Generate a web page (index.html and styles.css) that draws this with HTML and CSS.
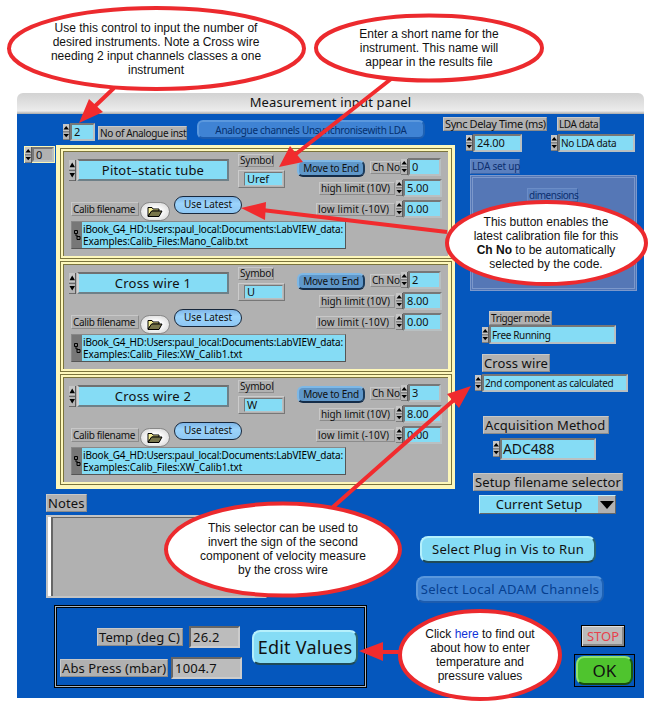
FILE: index.html
```html
<!DOCTYPE html>
<html lang="en">
<head>
<meta charset="utf-8">
<title>Measurement input panel</title>
<link rel="stylesheet" href="styles.css">
</head>
<body>
<svg class="defs" width="0" height="0">
  <symbol id="step" viewBox="0 0 7 18" preserveAspectRatio="none">
    <rect width="7" height="18" fill="#5c5c5c"/>
    <rect width="6" height="8.3" fill="#c6c6c6"/><rect y="9.3" width="6" height="8" fill="#b4b4b4"/>
    <path d="M3.2 2.2 6 6.2H.5zM3.2 15 .5 11.2H6z" fill="#000"/>
  </symbol>
  <symbol id="folder" viewBox="0 0 16 12">
    <path d="M1 10V1.5h4l1 1.5h6v2H5z" fill="#f5ee96" stroke="#000"/>
    <path d="M1 10.5 4.5 5H15l-3 5.500z" fill="#77754a" stroke="#000"/>
  </symbol>
  <symbol id="pathmark" viewBox="0 0 8 12">
    <path d="M1.500 1.500h3v3h-3zM4 7.500h3v3H4zM3 4.500V7h2" fill="none" stroke="#000"/>
  </symbol>
</svg>
<div class="stage">
  <div class="window">
    <div class="titlebar"><span class="t-title">Measurement input panel</span></div>
    <div class="panel">
      <div class="left">
        <div class="toolbar">
          <div class="spin count"><svg class="step"><use href="#step"/></svg><div class="field">2</div></div>
          <div class="label inst">No of Analogue inst</div>
          <div class="pill sync">Analogue channels Unsynchronisewith LDA</div>
        </div>
        <div class="array-row">
          <div class="spin index"><svg class="step"><use href="#step"/></svg><div class="field">0</div></div>
          <div class="array">
            <div class="cell"><div class="cell-in">
              <div class="cell-top">
                <div class="col-a">
                  <div class="spin name"><svg class="step"><use href="#step"/></svg><div class="field n1">Pitot–static tube</div></div>
                  <div class="calib"><div class="label file">Calib filename</div><div class="browse"><svg><use href="#folder"/></svg></div><div class="latest">Use Latest</div></div>
                </div>
                <div class="col-b"><div class="label symbol">Symbol</div><div class="symbox"><div class="field">Uref</div></div></div>
                <div class="move">Move to End</div>
                <div class="col-d">
                  <div class="line ch"><div class="label">Ch No</div><div class="spin"><svg class="step"><use href="#step"/></svg><div class="field">0</div></div></div>
                  <div class="line"><div class="label hi">high limit (10V)</div><div class="spin"><svg class="step"><use href="#step"/></svg><div class="field">5.00</div></div></div>
                  <div class="line"><div class="label lo">low limit (-10V)</div><div class="spin"><svg class="step"><use href="#step"/></svg><div class="field">0.00</div></div></div>
                </div>
              </div>
              <div class="path"><svg><use href="#pathmark"/></svg><div class="path-text"><div class="p1">iBook_G4_HD:Users:paul_local:Documents:LabVIEW_data:</div><div class="p2">Examples:Calib_Files:Mano_Calib.txt</div></div></div>
            </div></div>
            <div class="cell"><div class="cell-in">
              <div class="cell-top">
                <div class="col-a">
                  <div class="spin name"><svg class="step"><use href="#step"/></svg><div class="field">Cross wire 1</div></div>
                  <div class="calib"><div class="label file">Calib filename</div><div class="browse"><svg><use href="#folder"/></svg></div><div class="latest">Use Latest</div></div>
                </div>
                <div class="col-b"><div class="label symbol">Symbol</div><div class="symbox"><div class="field">U</div></div></div>
                <div class="move">Move to End</div>
                <div class="col-d">
                  <div class="line ch"><div class="label">Ch No</div><div class="spin"><svg class="step"><use href="#step"/></svg><div class="field">2</div></div></div>
                  <div class="line"><div class="label hi">high limit (10V)</div><div class="spin"><svg class="step"><use href="#step"/></svg><div class="field">8.00</div></div></div>
                  <div class="line"><div class="label lo">low limit (-10V)</div><div class="spin"><svg class="step"><use href="#step"/></svg><div class="field">0.00</div></div></div>
                </div>
              </div>
              <div class="path"><svg><use href="#pathmark"/></svg><div class="path-text"><div class="p1">iBook_G4_HD:Users:paul_local:Documents:LabVIEW_data:</div><div class="p2">Examples:Calib_Files:XW_Calib1.txt</div></div></div>
            </div></div>
            <div class="cell"><div class="cell-in">
              <div class="cell-top">
                <div class="col-a">
                  <div class="spin name"><svg class="step"><use href="#step"/></svg><div class="field">Cross wire 2</div></div>
                  <div class="calib"><div class="label file">Calib filename</div><div class="browse"><svg><use href="#folder"/></svg></div><div class="latest">Use Latest</div></div>
                </div>
                <div class="col-b"><div class="label symbol">Symbol</div><div class="symbox"><div class="field">W</div></div></div>
                <div class="move">Move to End</div>
                <div class="col-d">
                  <div class="line ch"><div class="label">Ch No</div><div class="spin"><svg class="step"><use href="#step"/></svg><div class="field">3</div></div></div>
                  <div class="line"><div class="label hi">high limit (10V)</div><div class="spin"><svg class="step"><use href="#step"/></svg><div class="field">8.00</div></div></div>
                  <div class="line"><div class="label lo">low limit (-10V)</div><div class="spin"><svg class="step"><use href="#step"/></svg><div class="field">0.00</div></div></div>
                </div>
              </div>
              <div class="path"><svg><use href="#pathmark"/></svg><div class="path-text"><div class="p1">iBook_G4_HD:Users:paul_local:Documents:LabVIEW_data:</div><div class="p2">Examples:Calib_Files:XW_Calib1.txt</div></div></div>
            </div></div>
          </div>
        </div>
        <div class="label big notes-label">Notes</div>
        <div class="notes"></div>
        <div class="ambient">
          <div class="readings">
            <div class="reading"><div class="label big temp">Temp (deg C)</div><div class="readout w1">26.2</div></div>
            <div class="reading"><div class="label big press">Abs Press (mbar)</div><div class="readout w2">1004.7</div></div>
          </div>
          <div class="button edit">Edit Values</div>
        </div>
      </div>
      <div class="right">
        <div class="lda-row">
          <div class="group"><div class="label delay-label">Sync Delay Time (ms)</div><div class="spin delay"><svg class="step"><use href="#step"/></svg><div class="field">24.00</div></div></div>
          <div class="group"><div class="label data-label">LDA data</div><div class="spin data"><svg class="step"><use href="#step"/></svg><div class="field">No LDA data</div></div></div>
        </div>
        <div class="label off setup-label">LDA set up</div>
        <div class="setup"><div class="label off dims">dimensions</div></div>
        <div class="label trigger-label">Trigger mode</div>
        <div class="spin trigger"><svg class="step"><use href="#step"/></svg><div class="field">Free Running</div></div>
        <div class="label big cross-label">Cross wire</div>
        <div class="spin cross"><svg class="step"><use href="#step"/></svg><div class="field">2nd component as calculated</div></div>
        <div class="label big acq-label">Acquisition Method</div>
        <div class="spin acq"><svg class="step"><use href="#step"/></svg><div class="field">ADC488</div></div>
        <div class="label big sel-label">Setup filename selector</div>
        <div class="popup"><span>Current Setup</span><div class="drop"><svg viewBox="0 0 14 8"><path d="M0 0h14L7 8z"/></svg></div></div>
        <div class="button plug">Select Plug in Vis to Run</div>
        <div class="button adam">Select Local ADAM Channels</div>
        <div class="stop">STOP</div>
        <div class="okbox"><div class="ok">OK</div></div>
      </div>
    </div>
  </div>
  <svg class="overlay" viewBox="0 0 654 706">
    <g stroke="#f12b2e" stroke-width="4" fill="none">
      <path d="M114 88 92 109M391 79 292 157M447 232 262 210M333 507 455 399M400 652H380"/>
    </g>
    <path d="M79 123 89 99 103 112zM279 167 290 146 303 162zM241 208 266 202 265 220zM471 386 447 394 459 408zM359 651 383 642V661z" fill="#f12b2e"/>
    <g stroke="#ec2a2e" stroke-width="4" fill="#fff">
      <ellipse cx="156.500" cy="48.500" rx="147.500" ry="40.500"/>
      <ellipse cx="429" cy="48" rx="113" ry="32.500"/>
      <ellipse cx="546.500" cy="243" rx="99.500" ry="41"/>
      <ellipse cx="283" cy="549.500" rx="117" ry="46"/>
      <ellipse cx="480" cy="655" rx="80" ry="44"/>
    </g>
  </svg>
  <div class="note note1">Use this control to input the number of<br>desired instruments. Note a Cross wire<br>needing 2 input channels classes a one<br>instrument</div>
  <div class="note note2">Enter a short name for the<br>instrument. This name will<br>appear in the results file</div>
  <div class="note note3">This button enables the<br>latest calibration file for this<br><b>Ch No</b> to be automatically<br>selected by the code.</div>
  <div class="note note4">This selector can be used to<br>invert the sign of the second<br>component of velocity measure<br>by the cross wire</div>
  <div class="note note5">Click <span class="link">here</span> to find out<br>about how to enter<br>temperature and<br>pressure values</div>
</div>
</body>
</html>
```
FILE: styles.css
```css
* { box-sizing: border-box; }
body { margin: 0; background: #fff; font: 10px/12px "Noto Sans", sans-serif; letter-spacing: -.4px; color: #111; }
.defs { position: absolute; }
.stage { position: relative; width: 654px; height: 706px; padding: 93px 0 0 17px; overflow: hidden; }
.window { width: 627px; }
.titlebar { height: 21px; border-radius: 6px 6px 0 0; background: linear-gradient(#d2d2d2, #ececec 85%, #aaa 100%); text-align: center; font-size: 13px; line-height: 19px; letter-spacing: .15px; white-space: nowrap; }
.panel { display: flex; height: 584px; background: #0557bd; }
.left { width: 426px; flex: none; }
.right { width: 201px; flex: none; padding-top: 3px; }
.label { background: #b1b1b1; border: 1px solid; border-color: #c8c8c8 #8c8c8c #8c8c8c #c8c8c8; height: 14px; line-height: 12px; padding-left: 1px; white-space: nowrap; flex: none; }
.big { font-size: 13px; height: 18px; line-height: 16px; letter-spacing: .1px; }
.spin { display: flex; align-items: center; flex: none; }
.step { width: 7px; height: 16px; flex: none; }
.field { background: #85dcf5; border: 2px solid; border-color: #777 #b9c0c2 #b9c0c2 #777; flex: 1; height: 100%; display: flex; align-items: center; padding-left: 2px; white-space: nowrap; line-height: 10px; min-width: 0; font-size: 11px; letter-spacing: -.1px; }

.toolbar { display: flex; height: 31px; padding-left: 46px; }
.count { margin-top: 9px; width: 32px; height: 18px; }
.inst { width: 89px; margin: 12px 0 0 3px; letter-spacing: -.35px; }
.pill { margin: 6px 0 0 10px; width: 228px; height: 19px; border-radius: 6px; background: #3f83d4; border: 2px solid; border-color: #5b98dd #1f62b4 #1d5cae #5b98dd; color: #05306e; text-align: center; line-height: 16px; white-space: nowrap; letter-spacing: -.3px; }

.array-row { display: flex; align-items: flex-start; padding-left: 7px; width: 438px; }
.index { margin: 1px 1px 0 0; width: 31px; height: 17px; background: #fbf6b8; padding: 1px; }
.index .field { background: #b1b1b1; }
.array { width: 399px; height: 344px; background: #fdf7ba; padding: 3px 3px 0 4px; flex: none; display: flex; flex-direction: column; gap: 2px; }
.cell { height: 111px; border: 1px solid #7b743c; padding: 2px 3px 2px 2px; }
.cell-in { height: 105px; background: #b1b1b1; border: solid #7b743c; border-width: 1px 0 0 1px; }
.cell-top { display: flex; height: 69px; }
.col-a { width: 174px; flex: none; padding-top: 7px; }
.name { margin-left: 5px; width: 160px; height: 22px; }
.name .step { height: 21px; margin-right: 1px; }
.name .field { justify-content: center; font-size: 13px; padding: 0; letter-spacing: .2px; border-color: #707070 #6e8088 #6e8088 #d0d0d0; }
.calib { display: flex; align-items: flex-start; margin: 15px 0 0 7px; }
.file { width: 68px; margin-top: 6px; letter-spacing: -.35px; }
.browse { margin: 6px 0 0 1px; width: 30px; height: 19px; border-radius: 10px; background: radial-gradient(#fff 30%, #ddd 80%); border: 1px solid #888; display: flex; align-items: center; justify-content: center; flex: none; }
.browse svg { width: 16px; height: 12px; }
.latest { margin-left: 4px; flex: none; width: 68px; height: 18px; border-radius: 9px; background: linear-gradient(#7fb6e8, #9cd4fb 40%, #8ec7f4); border: 1.5px solid #18283c; text-align: center; line-height: 14px; letter-spacing: -.1px; }
.col-b { width: 47px; flex: none; padding-top: 2px; }
.symbol { width: 36px; height: 13px; line-height: 11px; letter-spacing: -.2px; }
.symbox { margin-top: 3px; height: 18px; padding: 1px 1px 1px 5px; border: 1px solid; border-color: #ccc #777 #777 #ccc; display: flex; }
.symbox .field { border-width: 1px; }
.move { flex: none; margin: 8px 0 0 12px; width: 68px; height: 17px; border-radius: 6px; background: #5f97c9; border: 2px solid; border-color: #7eb8e6 #1c3c5c #142c48 #7eb8e6; text-align: center; line-height: 13px; white-space: nowrap; letter-spacing: -.25px; }
.col-d { flex: none; width: 130px; margin-left: -48px; display: flex; flex-direction: column; align-items: flex-end; gap: 3px; padding: 6px 5px 0 0; }
.line { display: flex; align-items: center; height: 18px; }
.line .label { margin-right: 1px; height: 13px; line-height: 11px; }
.line .spin { height: 18px; width: 46px; }
.ch { padding-right: 1px; }
.line.ch .label { width: 31px; margin-right: 0; letter-spacing: -.2px; }
.line.ch .spin { width: 40px; }
.hi { width: 76px; letter-spacing: -.1px; }
.lo { width: 79px; letter-spacing: .15px; }
.path { margin-left: 7px; width: 275px; height: 28px; background: #777; border: 1px solid; border-color: #888 #555 #555 #888; display: flex; align-items: center; }
.path svg { width: 8px; height: 12px; flex: none; margin: 0 1px; }
.path-text { flex: 1; min-width: 0; height: 100%; background: #85dcf5; line-height: 12px; padding: 1px 0 0 1px; white-space: nowrap; color: #000; letter-spacing: -.2px; }
.p1, .p2 { height: 12px; }
.p2 { letter-spacing: -.1px; }

.notes-label { margin: 5px 0 0 29px; width: 41px; }
.notes { margin: 3px 0 0 29px; width: 221px; height: 83px; background: #b1b1b1; border: 2px solid #c4c4c4; border-right-color: #555; box-shadow: inset 3px 0 #fff, inset 5px 1px #666; }
.ambient { margin: 7px 0 0 37px; width: 313px; height: 83px; display: flex; border: 1px solid #000; box-shadow: inset 0 0 0 1px #9fb4c8, inset 0 0 0 2px #000; padding: 20px 0 0 5px; }
.readings { width: 192px; flex: none; }
.reading { display: flex; align-items: center; height: 22px; }
.reading + .reading { margin-top: 9px; }
.temp { width: 86px; margin-left: 37px; }
.press { width: 108px; }
.readout { background: #bcbcbc; border: 2px solid; border-color: #666 #ccc #ccc #666; height: 22px; font-size: 13px; line-height: 18px; padding-left: 2px; letter-spacing: .2px; }
.w1 { width: 51px; margin-left: 6px; }
.w2 { width: 71px; margin-left: 3px; }
.button { background: #85dcf5; border: 2px solid; border-color: #b5f0fc #2b6473 #1f4a58 #b5f0fc; border-radius: 8px; text-align: center; white-space: nowrap; height: 27px; font-size: 13px; line-height: 22px; letter-spacing: .25px; }
.edit { margin-top: 4px; width: 106px; height: 35px; font-size: 18px; line-height: 30px; }

.lda-row { display: flex; }
.group { flex: none; }
.group + .group { margin-left: 4px; }
.delay-label { width: 104px; font-size: 11px; }
.delay { margin: 3px 0 0 23px; width: 56px; height: 18px; }
.data-label { width: 43px; margin-left: 6px; }
.data { margin-top: 3px; width: 84px; height: 18px; }
.off { background: #5b80bf; border-color: #6b8dc7 #3b64a8 #3b64a8 #6b8dc7; color: #0c2f6f; }
.setup-label { margin: 7px 0 0 27px; width: 50px; height: 15px; letter-spacing: -.2px; }
.setup { margin: 1px 0 0 27px; width: 167px; height: 116px; background: #5577b6; border: 3px double #7c98cb; padding: 10px 0 0 54px; }
.dims { width: 51px; letter-spacing: -.5px; }
.trigger-label { margin: 20px 0 0 46px; width: 63px; }
.trigger { margin-left: 39px; width: 134px; height: 19px; }
.cross-label { margin: 10px 0 0 39px; width: 68px; }
.cross { margin: 2px 0 0 32px; width: 153px; height: 18px; }
.trigger .field, .cross .field, .data .field { font-size: 10px; padding-left: 1px; letter-spacing: -.35px; }
.data .field { letter-spacing: -.3px; }
.acq-label { margin: 24px 0 0 40px; width: 126px; }
.acq { margin: 4px 0 0 50px; width: 103px; height: 22px; }
.acq .field { font-size: 14px; padding-left: 1px; }
.sel-label { margin: 13px 0 0 30px; width: 150px; }
.popup { margin: 4px 0 0 36px; width: 137px; height: 19px; background: #85dcf5; border: 1px solid; border-color: #c5eef8 #666 #666 #c5eef8; display: flex; font-size: 13px; line-height: 17px; letter-spacing: .1px; }
.popup span { flex: 1; text-align: center; }
.drop { width: 17px; background: #b1b1b1; display: flex; align-items: center; justify-content: center; }
.drop svg { width: 14px; height: 8px; }
.plug { margin: 22px 0 0 -23px; width: 176px; }
.adam { margin: 13px 0 0 -27px; width: 188px; background: #3f83d4; border-color: #5b98dd #1f62b4 #1d5cae #5b98dd; color: #063f8f; }
.stop { margin: 22px 0 0 138px; width: 44px; height: 22px; border: 1px solid #000; background: #bbb; box-shadow: inset 1px 1px #e0e0e0, inset -2px -2px #888; color: #e8404c; font-size: 13px; line-height: 20px; text-align: center; letter-spacing: 0; }
.okbox { margin: 7px 0 0 131px; width: 61px; height: 33px; border: 1px solid #000; padding: 1px; }
.ok { height: 29px; background: #4fc42e; border: 2px solid; border-color: #8be070 #1c5a10 #184c0c #8be070; border-radius: 8px; text-align: center; font-size: 17px; line-height: 25px; letter-spacing: 0; }

.overlay { position: absolute; left: 0; top: 0; width: 654px; height: 706px; }
.note { position: absolute; width: 220px; text-align: center; font: 12px/14px "Liberation Sans", sans-serif; letter-spacing: 0; color: #111; white-space: nowrap; }
.note1 { left: 46px; top: 21px; }
.note2 { left: 319px; top: 27px; }
.note3 { left: 436px; top: 215px; }
.note4 { left: 173px; top: 521px; }
.note5 { left: 370px; top: 627px; }
.link { color: #1033d8; }
```
